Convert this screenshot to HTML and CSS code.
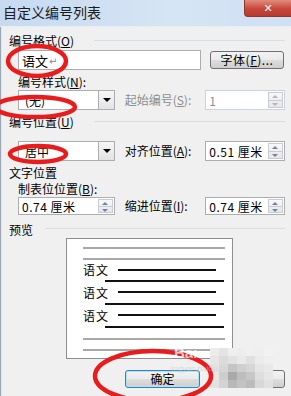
FILE: index.html
```html
<!DOCTYPE html>
<html lang="zh-CN">
  <head>
    <meta charset="utf-8">
    <title>自定义编号列表</title>
    <link rel="stylesheet" href="styles.css">
  </head>
  <body>
    <div class="window">
      <div class="titlebar">
        <span class="title">自定义编号列表</span>
        <span class="close">&#x2715;</span>
      </div>
      <div class="dialog">
        <div class="group-head"><span>编号格式(<u>O</u>)</span><i class="rule"></i></div>
        <div class="row row-format">
          <div class="field format">语文<span class="ret">&#x21B5;</span></div>
          <div class="btn font-btn">字体(<u>F</u>)...</div>
        </div>
        <div class="label sub">编号样式(<u>N</u>):</div>
        <div class="row">
          <div class="field combo"><span>(无)</span><span class="drop"></span></div>
          <div class="label mid disabled">起始编号(<u>S</u>):</div>
          <div class="field spin disabled-field"><span>1</span><span class="spinner"><b class="up"></b><b class="down"></b></span></div>
        </div>
        <div class="group-head pos"><span>编号位置(<u>U</u>)</span><i class="rule"></i></div>
        <div class="row row-align">
          <div class="field combo"><span>居中</span><span class="drop"></span></div>
          <div class="label mid">对齐位置(<u>A</u>):</div>
          <div class="field spin"><span>0.51 厘米</span><span class="spinner"><b class="up"></b><b class="down"></b></span></div>
        </div>
        <div class="label head">文字位置</div>
        <div class="label sub">制表位位置(<u>B</u>):</div>
        <div class="row row-text">
          <div class="field spin short"><span>0.74 厘米</span><span class="spinner"><b class="up"></b><b class="down"></b></span></div>
          <div class="label mid">缩进位置(<u>I</u>):</div>
          <div class="field spin"><span>0.74 厘米</span><span class="spinner"><b class="up"></b><b class="down"></b></span></div>
        </div>
        <div class="group-head preview-head"><span>预览</span><i class="rule"></i></div>
        <div class="preview">
          <div class="pline"><i class="gray"></i></div>
          <div class="pline"><i class="gray"></i></div>
          <div class="pline item"><span>语文</span><i class="black"></i></div>
          <div class="pline"><i class="black indent"></i></div>
          <div class="pline item tall"><span>语文</span><i class="black"></i></div>
          <div class="pline"><i class="black indent"></i></div>
          <div class="pline item tall"><span>语文</span><i class="black"></i></div>
          <div class="pline tall"><i class="black indent"></i></div>
          <div class="pline"><i class="gray"></i></div>
          <div class="pline"><i class="gray"></i></div>
        </div>
        <div class="buttons">
          <div class="btn ok">确定</div>
          <div class="btn cancel">取消</div>
        </div>
      </div>
    </div>

    <!-- the marks drawn over the screenshot -->
    <div class="mosaic">
      <i style="background:#ececec"></i><i style="background:#e4e4e4"></i><i style="background:#efefef"></i><i style="background:#ededed"></i><i style="background:#f0f0f0"></i><i style="background:#eeeeee"></i><i style="background:#f2f2f2"></i>
      <i style="background:#e6e6e6"></i><i style="background:#dcdcdc"></i><i style="background:#e2e2e2"></i><i style="background:#e9e9e9"></i><i style="background:#e0e0e0"></i><i style="background:#ebebeb"></i><i style="background:#efefef"></i>
      <i style="background:#e3e3e3"></i><i style="background:#d9d9d9"></i><i style="background:#c4c4c4"></i><i style="background:#cfcfcf"></i><i style="background:#d6d6d6"></i><i style="background:#e5e5e5"></i><i style="background:#e9e9e9"></i>
      <i style="background:#e8e8e8"></i><i style="background:#cdcdcd"></i><i style="background:#a9a9a9"></i><i style="background:#bdbdbd"></i><i style="background:#c7c7c7"></i><i style="background:#dedede"></i><i style="background:#e6e6e6"></i>
      <i style="background:#e2e2e2"></i><i style="background:#d4d4d4"></i><i style="background:#b8b8b8"></i><i style="background:#c3c3c3"></i><i style="background:#bcbcbc"></i><i style="background:#d8d8d8"></i><i style="background:#e1e1e1"></i>
    </div>
    <svg class="marks" width="291" height="396" viewBox="0 0 291 396">
      <ellipse cx="37" cy="61" rx="29" ry="15" />
      <ellipse cx="35" cy="107" rx="40" ry="10" />
      <ellipse cx="38" cy="154" rx="28" ry="8" />
      <ellipse cx="153" cy="376" rx="58" ry="25" />
    </svg>
    <div class="watermark">Bai<small>jingyan.baidu.com</small></div>
  </body>
</html>
```

FILE: styles.css
```css
body {
    margin: 0;
    width: 291px;
    height: 396px;
    overflow: hidden;
    position: relative;
    font-family: "Noto Sans CJK SC", "DejaVu Sans", sans-serif;
    font-size: 12px;
    color: #000;
    background: #f0f0f0;
}

u {
    text-decoration: underline;
}

.window {
    height: 396px;
    display: flex;
    flex-direction: column;
}

.titlebar {
    height: 26px;
    flex: none;
    display: flex;
    justify-content: space-between;
    align-items: flex-start;
    background: linear-gradient(90deg, #c7daf0 0%, #d6e5f5 60%, #cfe0f3 100%);
    border-bottom: 1px solid #e5edf6;
}

.title {
    padding: 3px 0 0 3px;
    font-size: 14px;
    line-height: 18px;
    color: #1b1b1b;
}

.close {
    width: 46px;
    height: 16px;
    margin-right: 0;
    border: 1px solid #8b3a32;
    border-top: 0;
    border-right: 0;
    border-radius: 0 0 0 4px;
    background: linear-gradient(#e08c7e, #c7463a 55%, #b73a2e);
    color: #fff;
    font-size: 11px;
    font-weight: bold;
    line-height: 15px;
    text-align: center;
}

.dialog {
    flex: 1;
    padding: 6px 6px 0 8px;
    border-left: 1px solid #9aa7b6;
    box-shadow: inset 1px 0 0 #dfe6ee;
}

.label {
    height: 16px;
    line-height: 16px;
    white-space: nowrap;
}

.label.sub {
    margin-left: 9px;
}

.label.head {
    margin-top: 4px;
}

.label.mid {
    margin: 0 6px 0 10px;
    width: 75px;
}

.disabled {
    color: #8d8d8d;
}

.group-head {
    display: flex;
    align-items: center;
    height: 16px;
    line-height: 16px;
}

.group-head .rule {
    flex: 1;
    margin-left: 20px;
    margin-right: 0;
    border-top: 1px solid #d5dfe5;
    transform: translateY(-1px);
}

.group-head.pos {
    margin-top: 4px;
}

.preview-head {
    margin-top: 7px;
}

.preview-head .rule {
    margin-left: 12px;
    transform: translateY(-2px);
}

.row {
    display: flex;
    align-items: center;
    margin-left: 9px;
    height: 20px;
}

.row-format {
    margin-top: 1px;
    margin-bottom: 4px;
}

.row-align {
    margin-top: 11px;
}

.row-text {
    margin-top: 0;
    height: 18px;
}

.field {
    box-sizing: border-box;
    height: 20px;
    background: #fff;
    border: 1px solid #abadb3;
    display: flex;
    align-items: center;
    padding-left: 3px;
    position: relative;
}

.field.format {
    width: 183px;
    font-size: 13px;
}

.ret {
    color: #888;
    font-size: 10px;
    margin-left: 1px;
}

.field.combo {
    width: 97px;
    padding-left: 6px;
}

.drop {
    position: absolute;
    right: 0;
    top: 0;
    bottom: 0;
    width: 16px;
    box-sizing: border-box;
    border-left: 1px solid #abadb3;
    background: linear-gradient(#f6f6f6, #e3e3e3);
}

.drop::after {
    content: "";
    position: absolute;
    left: 4px;
    top: 7px;
    border-left: 4px solid transparent;
    border-right: 4px solid transparent;
    border-top: 4px solid #000;
}

.field.spin {
    width: 80px;
    font-family: "Noto Sans CJK SC", sans-serif;
    letter-spacing: 0.5px;
}

.row-text .field {
    height: 18px;
}

.field.short {
    width: 97px;
}

.disabled-field {
    border-color: #c6d3e2;
    color: #8d8d8d;
    background: #fff;
}

.spinner {
    position: absolute;
    right: 1px;
    top: 1px;
    bottom: 1px;
    width: 13px;
    display: flex;
    flex-direction: column;
    border: 1px solid #c8ccd2;
    background: linear-gradient(#f8f8f8, #e6e6e6);
}

.spinner b {
    flex: 1;
    position: relative;
}

.spinner .up {
    border-bottom: 1px solid #c8ccd2;
}

.spinner b::after {
    content: "";
    position: absolute;
    left: 3px;
    top: 2px;
    border-left: 3px solid transparent;
    border-right: 3px solid transparent;
}

.spinner .up::after {
    border-bottom: 3px solid #6b84a8;
}

.spinner .down::after {
    border-top: 3px solid #6b84a8;
}

.disabled-field .spinner .up::after {
    border-bottom-color: #b7b7b7;
}

.disabled-field .spinner .down::after {
    border-top-color: #b7b7b7;
}

.btn {
    box-sizing: border-box;
    height: 18px;
    border: 1px solid #707070;
    border-radius: 3px;
    background: linear-gradient(#f2f2f2 0%, #ebebeb 50%, #dddddd 51%, #cfcfcf 100%);
    text-align: center;
    line-height: 16px;
}

.font-btn {
    width: 74px;
    margin-left: 9px;
    letter-spacing: 0.5px;
}

.preview {
    box-sizing: border-box;
    width: 167px;
    height: 121px;
    margin: 0 0 0 57px;
    padding-top: 3px;
    background: #fff;
    border: 1px solid #8e8e8e;
}

.pline {
    height: 11px;
    display: flex;
    align-items: center;
    padding-left: 16px;
}

.pline.tall {
    height: 12px;
}

.pline i {
    display: block;
    height: 2px;
}

.gray {
    width: 142px;
    background: #a9a9a9;
}

.black {
    background: #111;
}

.item span {
    font-size: 12px;
    line-height: 11px;
    letter-spacing: 1px;
    width: 35px;
}

.item .black {
    width: 98px;
}

.black.indent {
    width: 119px;
    margin-left: 22px;
}

.buttons {
    display: flex;
    justify-content: flex-end;
    gap: 10px;
    margin: 11px 0 0 0;
    padding-right: 0;
}

.buttons .btn {
    width: 75px;
    height: 18px;
}

.btn.ok {
    border-color: #3c7fb1;
    box-shadow: inset 0 0 0 1px #aee2f8;
}

.btn.cancel {
    margin-right: 0;
    color: #777;
}

.marks {
    position: absolute;
    left: 0;
    top: 0;
    pointer-events: none;
}

.marks ellipse {
    fill: none;
    stroke: #e81c1c;
    stroke-width: 4.5;
}

.mosaic {
    position: absolute;
    left: 210px;
    top: 348px;
    width: 63px;
    display: grid;
    grid-template-columns: repeat(7, 9px);
    grid-auto-rows: 8px;
}

.mosaic i {
    display: block;
}

.watermark {
    position: absolute;
    left: 174px;
    top: 345px;
    color: rgba(255, 255, 255, 0.75);
    font-family: "Liberation Sans", sans-serif;
    font-size: 15px;
    font-weight: bold;
    line-height: 16px;
}

.watermark small {
    display: block;
    margin-left: -4px;
    font-size: 8px;
    font-weight: normal;
    color: rgba(200, 200, 200, 0.6);
}
```
